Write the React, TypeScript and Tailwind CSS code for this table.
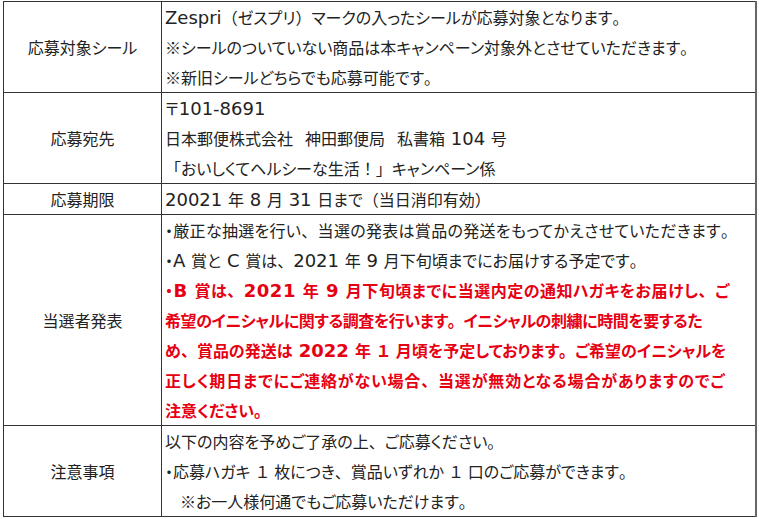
import React from 'react';

type Line = { text: string; red?: boolean; indent?: boolean; track?: string };
type Row = { label: string; lines: Line[] };

// "¦" marks a wider word gap as seen in the address line
const rows: Row[] = [
  {
    label: '応募対象シール',
    lines: [
      { text: 'Zespri（ゼスプリ）マークの入ったシールが応募対象となります。' },
      { text: '※シールのついていない商品は本キャンペーン対象外とさせていただきます。' },
      { text: '※新旧シールどちらでも応募可能です。' },
    ],
  },
  {
    label: '応募宛先',
    lines: [
      { text: '〒101-8691' },
      { text: '日本郵便株式会社¦神田郵便局¦私書箱 104 号' },
      { text: '「おいしくてヘルシーな生活！」キャンペーン係' },
    ],
  },
  {
    label: '応募期限',
    lines: [{ text: '20021 年 8 月 31 日まで（当日消印有効）' }],
  },
  {
    label: '当選者発表',
    lines: [
      { text: '・厳正な抽選を行い、当選の発表は賞品の発送をもってかえさせていただきます。', track: 'tracking-[0.3px]' },
      { text: '・A 賞と C 賞は、2021 年 9 月下旬頃までにお届けする予定です。' },
      { text: '・B 賞は、2021 年 9 月下旬頃までに当選内定の通知ハガキをお届けし、ご', red: true, track: 'tracking-[0.5px]' },
      { text: '希望のイニシャルに関する調査を行います。イニシャルの刺繍に時間を要するた', red: true, track: 'tracking-[-0.4px]' },
      { text: 'め、賞品の発送は 2022 年 １ 月頃を予定しております。ご希望のイニシャルを', red: true },
      { text: '正しく期日までにご連絡がない場合、当選が無効となる場合がありますのでご', red: true, track: 'tracking-[0.8px]' },
      { text: '注意ください。', red: true },
    ],
  },
  {
    label: '注意事項',
    lines: [
      { text: '以下の内容を予めご了承の上、ご応募ください。' },
      { text: '・応募ハガキ １ 枚につき、賞品いずれか １ 口のご応募ができます。' },
      { text: '※お一人様何通でもご応募いただけます。', indent: true },
    ],
  },
];

// Latin runs get a wider Verdana-like face; full-width punctuation keeps its full width
function Rich({ text }: { text: string }) {
  const parts = text.split(/(¦|[\x20-\x7e]+|[（）「」！、。])/).filter(Boolean);
  return (
    <>
      {parts.map((p, i) => {
        if (p === '¦') return <span key={i} className="inline-block w-[12px]" />;
        if (/^[\x20-\x7e]+$/.test(p)) {
          return (
            <span key={i} className="text-[18px] [font-family:'DejaVu_Sans',sans-serif]">
              {p}
            </span>
          );
        }
        if (/^[（）「」！、。]$/.test(p)) {
          return (
            <span key={i} className="[font-feature-settings:normal]">
              {p}
            </span>
          );
        }
        return <React.Fragment key={i}>{p}</React.Fragment>;
      })}
    </>
  );
}

export default function App() {
  return (
    <div className="w-[759px] h-[519px] bg-white overflow-hidden pt-px pl-[3px]">
      <table
        className="border-collapse text-[16px] leading-[30px] text-[#222] [font-feature-settings:'palt']"
        style={{ fontFamily: '"Noto Sans CJK JP", sans-serif' }}
      >
        <tbody>
          {rows.map((row) => (
            <tr key={row.label}>
              <td className="w-[158px] border border-[#333] text-center align-middle p-0">
                {row.label}
              </td>
              <td className="w-[594px] border border-[#333] border-r-2 border-r-[#666] align-top p-0 pl-[3px]">
                {row.lines.map((l, i) => (
                  <div
                    key={i}
                    className={`h-[30px] whitespace-nowrap ${l.red ? 'text-[#e60012] font-bold' : ''} ${l.indent ? 'pl-[15px]' : ''} ${l.track ?? ''}`}
                  >
                    <Rich text={l.text} />
                  </div>
                ))}
              </td>
            </tr>
          ))}
        </tbody>
      </table>
    </div>
  );
}
